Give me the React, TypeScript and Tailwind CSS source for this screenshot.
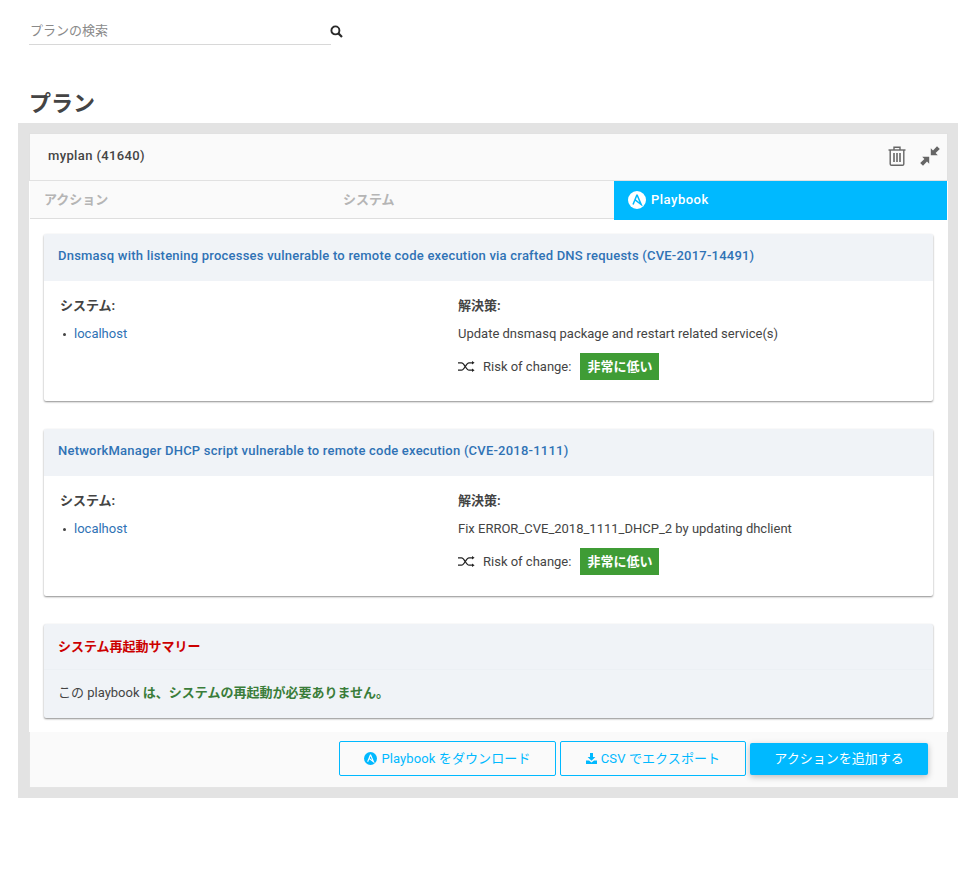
import React from "react";

const font = { fontFamily: '"Roboto","Noto Sans CJK JP",sans-serif' };

function AnsibleIcon({ size, bg, fg }: { size: number; bg: string; fg: string }) {
  return (
    <svg width={size} height={size} viewBox="0 0 20 20" className="shrink-0">
      <circle cx="10" cy="10" r="10" fill={bg} />
      <path d="M10 4.2 L14.6 15 L7.2 9.4 M10 4.2 L5.6 15" fill="none" stroke={fg} strokeWidth="1.7" />
    </svg>
  );
}

function SearchIcon() {
  return (
    <svg width="13" height="13" viewBox="0 0 13 13">
      <circle cx="5.4" cy="5.4" r="4" fill="none" stroke="#2a2a2a" strokeWidth="1.9" />
      <path d="M8.4 8.4 L12 12" stroke="#2a2a2a" strokeWidth="2.2" />
    </svg>
  );
}

function TrashIcon() {
  return (
    <svg width="18" height="20" viewBox="0 0 18 20" fill="none" stroke="#666" strokeWidth="1.4">
      <path d="M0.5 4 H17.5" />
      <path d="M6 4 V1.2 H12 V4" />
      <path d="M2.2 4 V18 Q2.2 19.3 3.5 19.3 H14.5 Q15.8 19.3 15.8 18 V4" />
      <path d="M6 7 V16 M9 7 V16 M12 7 V16" strokeWidth="1.6" />
    </svg>
  );
}

function CompressIcon() {
  return (
    <svg width="20" height="20" viewBox="0 0 20 20" fill="#666">
      <path d="M10.8 9.2 V2.2 L13 4.4 L17 0.2 L19.8 3 L15.6 7 L17.8 9.2 Z" />
      <path d="M9.2 10.8 V17.8 L7 15.6 L3 19.8 L0.2 17 L4.4 13 L2.2 10.8 Z" />
    </svg>
  );
}

function ShuffleIcon() {
  return (
    <svg width="17" height="11" viewBox="0 0 17 11" fill="none" stroke="#222" strokeWidth="1.3" className="shrink-0">
      <path d="M0 1.8 H3.5 C6.5 1.8 8 9.2 11 9.2 H14.5" />
      <path d="M0 9.2 H3.5 C6.5 9.2 8 1.8 11 1.8 H14.5" />
      <path d="M14 0 L16.6 1.8 L14 3.6 Z M14 7.4 L16.6 9.2 L14 11 Z" fill="#222" stroke="none" />
    </svg>
  );
}

function DownloadIcon() {
  return (
    <svg width="11" height="11" viewBox="0 0 11 11" fill="#00b9ff" className="shrink-0">
      <path d="M4 0 H7 V4 H9.4 L5.5 7.8 L1.6 4 H4 Z" />
      <path d="M0 7.6 H3 L5.5 9.4 L8 7.6 H11 V11 H0 Z" />
    </svg>
  );
}

function IssueCard({ title, solution }: { title: string; solution: string }) {
  return (
    <div className="rounded-[2px] bg-white shadow-[0_1px_2px_rgba(0,0,0,0.45)]">
      <div className="flex h-[47px] items-center rounded-t-[2px] bg-[#f0f3f7] pb-[3px] pl-[14px] text-[13px] font-medium tracking-[0.22px] text-[#2f72b5]">
        {title}
      </div>
      <div className="flex h-[120px] pl-4 pt-4">
        <div className="w-[398px]">
          <div className="text-[13px] font-bold leading-[18px] text-[#444]">システム:</div>
          <div className="mt-[10px] flex items-center text-[13px] leading-[18px] text-[#2f72b5]">
            <span className="mr-[8px] ml-[3px] h-[3px] w-[3px] rounded-full bg-[#444]" />
            localhost
          </div>
        </div>
        <div>
          <div className="text-[13px] font-bold leading-[18px] text-[#444]">解決策:</div>
          <div className="mt-[10px] text-[13px] leading-[18px] text-[#444]">{solution}</div>
          <div className="mt-[10px] flex items-center text-[13px] text-[#444]">
            <ShuffleIcon />
            <span className="ml-2">Risk of change:</span>
            <span className="ml-[9px] flex h-[27px] w-[79px] items-center justify-center bg-[#3f9c35] font-bold text-white">
              非常に低い
            </span>
          </div>
        </div>
      </div>
    </div>
  );
}

export default function App() {
  return (
    <div className="min-h-[873px] bg-white" style={font}>
      <div className="flex pl-[29px] pt-[18px]">
        <div className="flex h-[27px] w-[302px] items-start border-b border-[#d8d8d8] pl-px pt-[4px] text-[13px] leading-[18px] text-[#8a8a8a]">
          プランの検索
        </div>
        <div className="-ml-px pt-[7px]">
          <SearchIcon />
        </div>
      </div>

      <h1 className="ml-[29px] mt-[44px] text-[22px] font-bold leading-[30px] text-[#444]">プラン</h1>

      <div className="ml-[18px] mt-[4px] h-[675px] w-[940px] bg-[#e3e3e3] pb-[10px] pl-[11px] pr-[10px] pt-[10px]">
        <div className="flex h-full flex-col bg-white">
          <div className="flex h-[48px] shrink-0 items-center justify-between border border-[#e1e1e1] bg-[#fafafa] pb-[2px] pl-[18px] pr-[7px]">
            <span className="text-[13px] font-medium tracking-[0.37px] text-[#444]">myplan (41640)</span>
            <div className="flex items-center gap-[14px]">
              <TrashIcon />
              <CompressIcon />
            </div>
          </div>

          <div className="flex h-[39px] shrink-0 pl-px pr-px text-[13px] font-bold">
            <div className="flex h-[38px] w-[299px] items-center border-b border-[#dedede] bg-[#fafafa] pl-[14px] text-[#b5b5b5]">
              アクション
            </div>
            <div className="flex h-[38px] w-[285px] items-center border-b border-[#dedede] bg-[#fafafa] pl-[14px] text-[#b5b5b5]">
              システム
            </div>
            <div className="flex h-[39px] w-[333px] items-center gap-[5px] bg-[#00b9ff] pb-[1px] pl-[14px] text-[13px] font-medium tracking-[0.5px] text-white">
              <AnsibleIcon size={18} bg="#ffffff" fg="#00b9ff" />
              Playbook
            </div>
          </div>

          <div className="flex flex-1 flex-col gap-[28px] pl-[15px] pr-[15px] pt-[14px]">
            <IssueCard
              title="Dnsmasq with listening processes vulnerable to remote code execution via crafted DNS requests (CVE-2017-14491)"
              solution="Update dnsmasq package and restart related service(s)"
            />
            <IssueCard
              title="NetworkManager DHCP script vulnerable to remote code execution (CVE-2018-1111)"
              solution="Fix ERROR_CVE_2018_1111_DHCP_2 by updating dhclient"
            />
            <div className="h-[94px] rounded-[2px] bg-[#f0f3f7] shadow-[0_1px_2px_rgba(0,0,0,0.45)]">
              <div className="flex h-[46px] items-center border-b border-[#ecf0f4] pl-[14px] text-[13px] font-bold text-[#cc0000]">
                システム再起動サマリー
              </div>
              <div className="pl-[14px] pt-[14px] text-[13px] leading-[18px] text-[#444]">
                この playbook <span className="font-bold text-[#3a7d3a]">は、システムの再起動が必要ありません。</span>
              </div>
            </div>
          </div>

          <div className="flex h-[56px] shrink-0 items-center justify-end gap-[4px] border-x border-b border-[#e4e4e4] bg-[#fafafa] pb-[2px] pr-[19px] text-[13px] text-[#00b9ff]">
            <div className="flex h-[35px] w-[217px] items-center justify-center gap-[4px] rounded-[2px] border border-[#00b9ff] tracking-[0.1px]">
              <AnsibleIcon size={13} bg="#00b9ff" fg="#ffffff" />
              Playbook をダウンロード
            </div>
            <div className="flex h-[35px] w-[186px] items-center justify-center gap-[4px] rounded-[2px] border border-[#00b9ff] tracking-[0.1px]">
              <DownloadIcon />
              CSV でエクスポート
            </div>
            <div className="flex h-[32px] w-[178px] items-center justify-center rounded-[2px] bg-[#00b9ff] text-white shadow-[0_2px_6px_rgba(0,0,0,0.25)]">
              アクションを追加する
            </div>
          </div>
        </div>
      </div>
    </div>
  );
}
